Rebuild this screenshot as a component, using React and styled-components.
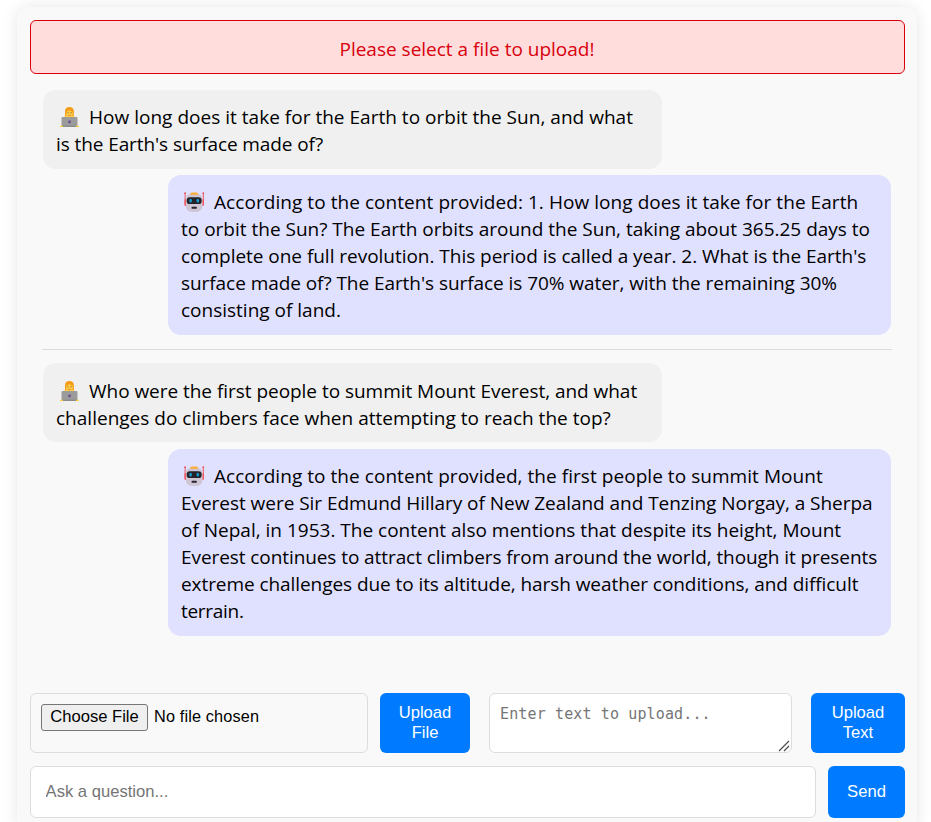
import React from "react";
import styled, { createGlobalStyle } from "styled-components";

const GlobalStyle = createGlobalStyle`
  *, *::before, *::after { box-sizing: border-box; }
  html { overflow: hidden; }
  body {
    margin: 0;
    height: 822px;
    overflow: hidden;
    background: #fff;
    color: #000;
    font-family: "Open Sans", "Noto Sans", sans-serif;
    font-size: 19px;
  }
`;

const Card = styled.main`
  display: flex;
  flex-direction: column;
  width: 900px;
  height: 824px;
  margin: 7px 14px 0 17px;
  padding: 13px 12px 12px 13px;
  border-radius: 13px;
  background: #f9f9f9;
  box-shadow: 0 0 16px rgba(0, 0, 0, 0.1);
`;

const ErrorBanner = styled.div`
  flex: none;
  height: 54px;
  padding-right: 1px;
  border: 1px solid #d8000c;
  border-radius: 6px;
  background: #ffdddd;
  color: #d8000c;
  line-height: 56px;
  text-align: center;
`;

const Messages = styled.section`
  display: flex;
  flex-direction: column;
  flex: none;
  height: 603px;
  margin-top: 16px;
  padding: 0 14px 0 13px;
`;

const Bubble = styled.div`
  align-self: ${(p) => (p.$bot ? "flex-end" : "flex-start")};
  flex: none;
  width: ${(p) => (p.$bot ? "723px" : "619px")};
  padding: ${(p) => p.$top}px 0 ${(p) => 25 - p.$top}px 13px;
  border-radius: 13px;
  background: ${(p) => (p.$bot ? "#e0e0ff" : "#f0f0f0")};
  margin-top: ${(p) => p.$gap}px;
`;

const Line = styled.span`
  display: flex;
  align-items: center;
  height: 27px;
  line-height: 27px;
  white-space: pre;
  letter-spacing: ${(p) => p.$track || 0}px;
`;

const Icon = styled.svg`
  flex: none;
  width: 26px;
  height: 24px;
  margin: 0 7px 2px 0;
`;

const Divider = styled.hr`
  flex: none;
  width: 850px;
  height: 1px;
  margin: 14px 0 13px -1px;
  border: 0;
  background: #dddddd;
`;

const UploadRow = styled.div`
  display: grid;
  grid-template-columns: 338px 90px 303px 94px;
  column-gap: 12px;
  height: 60px;
  flex: none;
`;

const TextUpload = styled.div`
  display: grid;
  grid-column: 3 / 5;
  grid-template-columns: 303px 94px;
  column-gap: 19px;
  margin-left: 7px;
`;

const FileInput = styled.input`
  width: 100%;
  height: 60px;
  padding: 10px;
  border: 1px solid #dddddd;
  border-radius: 6px;
  font: 16.3px "Liberation Sans", Arial, sans-serif;
  letter-spacing: 0.14px;
  color: #000;

  &::file-selector-button {
    width: 107px;
    height: 27px;
    margin: 0 6px 0 0;
    padding: 0 0 2px;
    border: 1px solid #767676;
    border-radius: 3px;
    background: #efefef;
    color: #000;
    font: 16.6px "Liberation Sans", Arial, sans-serif;
  }
`;

const TextField = styled.div`
  position: relative;
  height: 60px;
`;

const TextInput = styled.textarea`
  display: block;
  width: 100%;
  height: 100%;
  padding: 10px;
  border: 1px solid #dddddd;
  border-radius: 6px;
  background: #fff;
  font: 15px/20px "DejaVu Sans Mono", monospace;
  letter-spacing: 0.13px;
  resize: none;

  &::placeholder { color: #757575; }
`;

const Grip = styled.svg`
  position: absolute;
  right: 2px;
  bottom: 1px;
  width: 12px;
  height: 12px;
  pointer-events: none;
`;

const Button = styled.button`
  height: 100%;
  padding: 0 0 1px;
  border: 0;
  border-radius: 6px;
  background: #007bff;
  color: #fff;
  font: 16.6px/20px "Liberation Sans", Arial, sans-serif;
  white-space: pre-line;
`;

const AskRow = styled.div`
  display: grid;
  grid-template-columns: 786px 77px;
  column-gap: 12px;
  height: 52px;
  flex: none;
  margin-top: 13px;
`;

const QuestionInput = styled.input`
  padding: 0 14px 1px 14.6px;
  border: 1px solid #dddddd;
  border-radius: 6px;
  background: #fff;
  font: 16.6px "Liberation Sans", Arial, sans-serif;

  &::placeholder { color: #757575; }
`;

function PersonIcon() {
  return (
    <Icon viewBox="0 0 26 24" aria-label="Person at laptop">
      <path d="M9 11V6.3C9 3.4 10.8 2 13.4 2s4.500 1.400 4.500 4.300V11z" fill="#f59b16" />
      <path d="M5.700 16c.2-3.300 2.100-5 5.200-5h5c3.100 0 4.900 1.700 5.200 5z" fill="#ffc83d" />
      <path d="M10 6.700c1.800 0 2.400-1 3.400-1.700 1 .7 1.900 1.700 3.500 1.700v2.100c0 2.300-1.500 3.800-3.500 3.800S10 11.100 10 8.800z" fill="#ffcb45" />
      <path d="M10.700 7.800h2M14.200 7.800h2" stroke="#a67c42" strokeWidth=".9" />
      <path d="M12.200 10.500h2.500" stroke="#c9742d" strokeWidth=".7" />
      <rect x="5.500" y="12" width="16" height="9.600" rx="1" fill="#9b9b9b" />
      <path d="M4 21.900c0-1 .8-1.500 2-1.500l2.200 1.500zm19 0c0-1-.8-1.500-2-1.500l-2.200 1.500z" fill="#ffc83d" />
      <rect x="7" y="20.700" width="13" height="1.200" fill="#858585" />
      <rect x="12.200" y="15.500" width="2.700" height="2.700" rx=".5" fill="#70548b" />
    </Icon>
  );
}

function RobotIcon() {
  return (
    <Icon viewBox="0 0 26 24" aria-label="Robot">
      <path d="M4.100 3.200v11.300M22.300 3.200v11.300" stroke="#ee5961" strokeWidth="1" />
      <circle cx="4.100" cy="3.200" r=".9" fill="#e44e58" />
      <circle cx="22.300" cy="3.200" r=".9" fill="#e44e58" />
      <rect x="3.500" y="9" width="1.800" height="7" rx=".9" fill="#f2545b" />
      <rect x="21.100" y="9" width="1.800" height="7" rx=".9" fill="#f2545b" />
      <path d="M4.900 9.500c0-4 2.600-6 8.200-6s8.400 2 8.400 6v5.700c0 4.800-2.600 6.900-8.400 6.900s-8.200-2.100-8.200-6.900z" fill="#cec5d5" />
      <path d="M9.600 3.500c.3-.8.8-1 1.700-1h3.800c.9 0 1.400.2 1.700 1l.4 1.200H9.200z" fill="#fbad30" />
      <rect x="5.700" y="7.300" width="15" height="6.800" rx="3.200" fill="#242329" />
      <ellipse cx="9.600" cy="10.700" rx="1.300" ry="1.900" fill="#159ed4" />
      <ellipse cx="16.800" cy="10.700" rx="1.300" ry="1.900" fill="#159ed4" />
      <rect x="10.500" y="16.700" width="5.400" height="2" rx=".8" fill="#292530" />
    </Icon>
  );
}

const messages = [
  {
    bot: false,
    top: 14,
    gap: 0,
    lines: [
      ["How long does it take for the Earth to orbit the Sun, and what", 0.02],
      ["is the Earth's surface made of?", -0.09],
    ],
  },
  {
    bot: true,
    top: 14,
    gap: 6,
    lines: [
      ["According to the content provided: 1. How long does it take for the Earth", 0.06],
      ["to orbit the Sun? The Earth orbits around the Sun, taking about 365.25 days to", 0],
      ["complete one full revolution. This period is called a year. 2. What is the Earth's", -0.03],
      ["surface made of? The Earth's surface is 70% water, with the remaining 30%", -0.06],
      ["consisting of land.", 0],
    ],
  },
  {
    bot: false,
    top: 15,
    gap: 0,
    lines: [
      ["Who were the first people to summit Mount Everest, and what", -0.035],
      ["challenges do climbers face when attempting to reach the top?", 0.01],
    ],
  },
  {
    bot: true,
    top: 14,
    gap: 7,
    lines: [
      ["According to the content provided, the first people to summit Mount", 0.05],
      ["Everest were Sir Edmund Hillary of New Zealand and Tenzing Norgay, a Sherpa", -0.04],
      ["of Nepal, in 1953. The content also mentions that despite its height, Mount", 0],
      ["Everest continues to attract climbers from around the world, though it presents", -0.08],
      ["extreme challenges due to its altitude, harsh weather conditions, and difficult", -0.07],
      ["terrain.", -0.3],
    ],
  },
];

function Message({ bot, top, gap, lines }) {
  return (
    <Bubble $bot={bot} $top={top} $gap={gap}>
      {lines.map(([text, track], i) => (
        <Line key={text} $track={track}>
          {i === 0 && (bot ? <RobotIcon /> : <PersonIcon />)}
          {text}
        </Line>
      ))}
    </Bubble>
  );
}

export default function App() {
  return (
    <>
      <GlobalStyle />
      <Card>
        <ErrorBanner>Please select a file to upload!</ErrorBanner>
        <Messages>
          <Message {...messages[0]} />
          <Message {...messages[1]} />
          <Divider />
          <Message {...messages[2]} />
          <Message {...messages[3]} />
        </Messages>
        <UploadRow>
          <FileInput type="file" />
          <Button>{"Upload\nFile"}</Button>
          <TextUpload>
            <TextField>
              <TextInput placeholder="Enter text to upload..." />
              <Grip viewBox="0 0 12 12" fill="none" stroke="#505050" strokeWidth="1.3">
                <path d="M1 11L11 1M6 11L11 6" />
              </Grip>
            </TextField>
            <Button>{"Upload\nText"}</Button>
          </TextUpload>
        </UploadRow>
        <AskRow>
          <QuestionInput placeholder="Ask a question..." />
          <Button>Send</Button>
        </AskRow>
      </Card>
    </>
  );
}
